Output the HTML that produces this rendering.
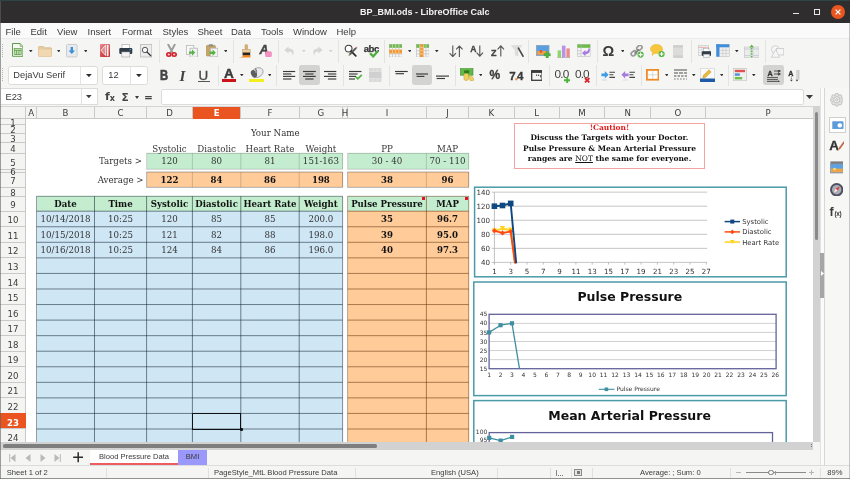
<!DOCTYPE html><html lang="en"><head><meta charset="utf-8"><title>BP_BMI.ods - LibreOffice Calc</title><style>
*{box-sizing:border-box;margin:0;padding:0}
html,body{width:850px;height:479px;overflow:hidden;background:#f5f5f4}
#root{position:absolute;left:0;top:0;width:850px;height:479px;overflow:hidden;will-change:transform}
body{position:relative;font-family:"DejaVu Sans","Liberation Sans",sans-serif;font-size:9px;color:#3a3a3a}
.a{position:absolute}
.t{position:absolute;white-space:nowrap;line-height:1}
.ui{font-family:"Liberation Sans","DejaVu Sans",sans-serif}
.sf{font-family:"DejaVu Serif","Liberation Serif",serif}
.c{position:absolute;white-space:nowrap;text-align:center;font-family:"DejaVu Serif","Liberation Serif",serif;font-size:8.68px;line-height:1;color:#333}
.b{font-weight:bold;color:#111;font-size:8.6px}
.hd{position:absolute;text-align:center;font-size:8.6px;line-height:1;color:#3c3c3c;white-space:nowrap}
.vl{position:absolute;width:1px}
.hl{position:absolute;height:1px}
</style></head><body><div id="root">
<div class="a" style="left:0;top:0;width:850px;height:23px;background:#2f2d2d"></div>
<div class="a" style="left:0;top:0;width:850px;height:1px;background:#2b4645"></div>
<div class="t ui" style="left:360.1px;top:7.6px;color:#f4f4f4;font-weight:bold;font-size:9.2pxletter-spacing:-0.067px;">BP_BMI.ods - LibreOffice Calc</div>
<div class="a" style="left:793px;top:12.600px;width:6.200px;height:1.300px;background:#e8e8e8"></div>
<div class="a" style="left:813.700px;top:8.800px;width:6.200px;height:5.800px;border:1.200px solid #e8e8e8"></div>
<div class="a" style="left:831px;top:5px;width:14px;height:14px;border-radius:7px;background:#e9561f"></div>
<svg class="a" style="left:831px;top:5px" width="14" height="14" viewBox="0 0 14 14"><path d="M4.6 4.6L9.4 9.4M9.4 4.6L4.6 9.4" stroke="#fff" stroke-width="1.3" fill="none"/></svg>
<div class="a" style="left:0;top:23px;width:850px;height:15.5px;background:#fafafa;border-bottom:1px solid #ebebea"></div>
<div class="t ui" style="left:5.5px;top:27.2px;font-size:9.5px;color:#3d3d3dletter-spacing:-0.203px;">File</div>
<div class="t ui" style="left:30.5px;top:27.2px;font-size:9.5px;color:#3d3d3dletter-spacing:0.031px;">Edit</div>
<div class="t ui" style="left:57px;top:27.2px;font-size:9.5px;color:#3d3d3dletter-spacing:0.145px;">View</div>
<div class="t ui" style="left:87.5px;top:27.2px;font-size:9.5px;color:#3d3d3dletter-spacing:-0.044px;">Insert</div>
<div class="t ui" style="left:122px;top:27.2px;font-size:9.5px;color:#3d3d3dletter-spacing:0.068px;">Format</div>
<div class="t ui" style="left:162.5px;top:27.2px;font-size:9.5px;color:#3d3d3dletter-spacing:-0.229px;">Styles</div>
<div class="t ui" style="left:197.5px;top:27.2px;font-size:9.5px;color:#3d3d3dletter-spacing:-0.266px;">Sheet</div>
<div class="t ui" style="left:231px;top:27.2px;font-size:9.5px;color:#3d3d3dletter-spacing:-0.145px;">Data</div>
<div class="t ui" style="left:261px;top:27.2px;font-size:9.5px;color:#3d3d3dletter-spacing:-0.037px;">Tools</div>
<div class="t ui" style="left:293px;top:27.2px;font-size:9.5px;color:#3d3d3dletter-spacing:0.034px;">Window</div>
<div class="t ui" style="left:336.5px;top:27.2px;font-size:9.5px;color:#3d3d3dletter-spacing:-0.137px;">Help</div>
<div class="a" style="left:2.3px;top:44px;width:1px;height:13.5px;background:repeating-linear-gradient(#b4b4b4 0 1px,transparent 1px 2px)"></div>
<div class="a" style="left:2.3px;top:68.3px;width:1px;height:13.5px;background:repeating-linear-gradient(#b4b4b4 0 1px,transparent 1px 2px)"></div>
<svg class="a" style="left:11.5px;top:43.4px" width="11.4" height="13.8" viewBox="0 0 11.4 13.8"><path d="M0.5 0.5h7.6l2.8 2.8v10h-10.4z" fill="#f6faf3" stroke="#5e9b4a" stroke-width="1"/><path d="M8.100 0.500v2.800h2.800" fill="#cfe3c4" stroke="#5e9b4a" stroke-width="0.600"/><rect x="2.2" y="5.600" width="7" height="6" fill="#c3e2b3" stroke="#5a9646" stroke-width="0.7"/><path d="M2.200 7.400h7" stroke="#5a9646" stroke-width="0.800"/><path d="M4.5 7.400v4.200M6.9 7.400v4.200" stroke="#5a9646" stroke-width="0.700"/></svg>
<svg class="a" style="left:29.2px;top:49.9px" width="3.6" height="2.4" viewBox="0 0 3.6 2.4"><path d="M0 0h3.6L1.8 2.4z" fill="#2e2e2e"/></svg>
<svg class="a" style="left:38px;top:45.6px" width="14" height="11" viewBox="0 0 14 11"><path d="M0.5 1.2q0-0.7 0.7-0.7h4.2l1 1.3h6.4q0.7 0 0.7 0.7v7.3q0 0.7-0.7 0.7h-11.6q-0.7 0-0.7-0.7z" fill="#e6caa0" stroke="#d2b384" stroke-width="0.7"/><path d="M0.6 3.6h12.8v6.3q0 0.6-0.6 0.6h-11.6q-0.6 0-0.6-0.6z" fill="#f0d8b3"/></svg>
<svg class="a" style="left:56.5px;top:49.9px" width="3.6" height="2.4" viewBox="0 0 3.6 2.4"><path d="M0 0h3.6L1.8 2.4z" fill="#2e2e2e"/></svg>
<svg class="a" style="left:66.3px;top:44.3px" width="11.6" height="13.4" viewBox="0 0 11.6 13.4"><rect x="0.5" y="0.5" width="10.6" height="12.4" rx="1" fill="#e8eaec" stroke="#c2c5c9" stroke-width="0.8"/><path d="M4.6 3h2.4v3.6h2l-3.2 3.4l-3.2-3.4h2z" fill="#3a8fd6"/></svg>
<svg class="a" style="left:83.8px;top:49.9px" width="3.6" height="2.4" viewBox="0 0 3.6 2.4"><path d="M0 0h3.6L1.8 2.4z" fill="#2e2e2e"/></svg>
<svg class="a" style="left:100px;top:44px" width="10" height="13" viewBox="0 0 10 13"><defs><linearGradient id="pg" x1="0" y1="0" x2="0.6" y2="1"><stop offset="0" stop-color="#e98a8e"/><stop offset="1" stop-color="#c4343c"/></linearGradient></defs><rect x="0" y="0" width="10" height="13" rx="0.8" fill="url(#pg)"/><path d="M5.600 1.200L1 6.200l4.600 5.400z" fill="rgba(255,255,255,0.30)" stroke="#fdf0f0" stroke-width="0.800"/><rect x="6.800" y="0.800" width="1.700" height="11.400" fill="#fdf0f0"/></svg>
<svg class="a" style="left:119px;top:44.3px" width="13.6" height="13.4" viewBox="0 0 13.6 13.4"><rect x="3" y="0.4" width="7.6" height="4.2" fill="#fff" stroke="#9aa0a6" stroke-width="0.6"/><rect x="0.3" y="4" width="13" height="6" rx="1.2" fill="#2f3b46"/><rect x="2.8" y="8" width="8" height="5" fill="#f4f4f4" stroke="#9aa0a6" stroke-width="0.6"/><rect x="10.6" y="5.2" width="1.4" height="1" fill="#5bb0e8"/></svg>
<svg class="a" style="left:140.2px;top:44.3px" width="12.2" height="13.4" viewBox="0 0 12.2 13.4"><rect x="0.4" y="0.4" width="11.4" height="12.6" fill="#ececec" stroke="#b9b9b9" stroke-width="0.8"/><circle cx="5" cy="6" r="2.700" fill="#f6f6f6" stroke="#4a4a4a" stroke-width="0.900"/><path d="M7 8l3.800 3.800" stroke="#3a3a3a" stroke-width="1.300" stroke-linecap="round"/></svg>
<div class="a" style="left:159.2px;top:40px;width:1px;height:22.5px;background:#e3e3e2"></div>
<svg class="a" style="left:166px;top:44.3px" width="11" height="13" viewBox="0 0 11 13"><path d="M2.200 0.500l4.400 8.200M8.800 0.500l-4.400 8.200" stroke="#9b9b9b" stroke-width="1.900" stroke-linecap="round"/><ellipse cx="2.800" cy="10.500" rx="2" ry="1.700" fill="#f3c0c2" stroke="#d3212a" stroke-width="1.600"/><ellipse cx="8.200" cy="10.500" rx="2" ry="1.700" fill="#f3c0c2" stroke="#d3212a" stroke-width="1.600"/></svg>
<svg class="a" style="left:186.2px;top:44.6px" width="12" height="12.8" viewBox="0 0 12 12.8"><rect x="0.4" y="0.4" width="7.4" height="9" fill="#fafafa" stroke="#b7b7b7" stroke-width="0.8"/><rect x="4" y="3.2" width="7.4" height="9" fill="#f1f1f1" stroke="#b7b7b7" stroke-width="0.8"/><path d="M3 6.4h3v-2l3.2 3.2l-3.2 3.2v-2h-3z" fill="#56b346"/></svg>
<svg class="a" style="left:206px;top:44.3px" width="12.2" height="13.2" viewBox="0 0 12.2 13.2"><rect x="0.4" y="1.4" width="9" height="10.6" rx="0.9" fill="#c8a467" stroke="#a98547" stroke-width="0.6"/><rect x="2.8" y="0.3" width="4.2" height="2.2" rx="0.6" fill="#8d8d8d"/><rect x="4.6" y="4.2" width="7.2" height="8.6" fill="#f3f3f3" stroke="#b7b7b7" stroke-width="0.7"/><path d="M3.6 7.6h3v-2l3.2 3.2l-3.2 3.2v-2h-3z" fill="#56b346"/></svg>
<svg class="a" style="left:223.7px;top:49.9px" width="3.6" height="2.4" viewBox="0 0 3.6 2.4"><path d="M0 0h3.6L1.8 2.4z" fill="#2e2e2e"/></svg>
<div class="a" style="left:232.5px;top:40px;width:1px;height:22.5px;background:#e3e3e2"></div>
<svg class="a" style="left:238.5px;top:43.6px" width="12.4" height="14" viewBox="0 0 12.4 14"><rect x="6" y="0.4" width="2.6" height="5.4" rx="1.2" fill="#d9b27a" stroke="#b98f55" stroke-width="0.5"/><rect x="3.6" y="5.6" width="7.6" height="3" fill="#e8cf9f" stroke="#b98f55" stroke-width="0.5"/><rect x="3.6" y="8.6" width="7.6" height="3" fill="#2b2420"/><path d="M0.4 13.2q3.6 0 3.6-2h7.4v2.2h-11z" fill="#ef8a1d"/></svg>
<div class="t ui" style="left:259.400px;top:43.800px;font-size:12.400px;font-weight:bold;font-style:italic;color:#454545;-webkit-text-stroke:0.500px #454545">A</div>
<svg class="a" style="left:265.4px;top:50.6px" width="7.2" height="6.6" viewBox="0 0 7.2 6.6"><rect x="0.400" y="0.400" width="6.200" height="5.600" rx="1.600" fill="#f391c0" stroke="#e77fb2" stroke-width="0.400"/></svg>
<div class="a" style="left:278px;top:40px;width:1px;height:22.5px;background:#e3e3e2"></div>
<svg class="a" style="left:284px;top:45.6px" width="11" height="10.4" viewBox="0 0 11 10.4"><path d="M4.6 0.4L0.4 4l4.2 3.6v-2.2q4.2-0.2 4 4.6q3.4-7.4-4-7.6z" fill="#d6d6d6"/></svg>
<svg class="a" style="left:302.2px;top:49.9px" width="3.6" height="2.4" viewBox="0 0 3.6 2.4"><path d="M0 0h3.6L1.8 2.4z" fill="#d0d0d0"/></svg>
<svg class="a" style="left:312px;top:45.6px" width="11" height="10.4" viewBox="0 0 11 10.4"><path d="M6.4 0.4L10.6 4l-4.2 3.6v-2.2q-4.2-0.2-4 4.6q-3.4-7.4 4-7.6z" fill="#d6d6d6"/></svg>
<svg class="a" style="left:329.4px;top:49.9px" width="3.6" height="2.4" viewBox="0 0 3.6 2.4"><path d="M0 0h3.6L1.8 2.4z" fill="#d0d0d0"/></svg>
<div class="a" style="left:338.3px;top:40px;width:1px;height:22.5px;background:#e3e3e2"></div>
<svg class="a" style="left:344px;top:44.2px" width="14" height="13.4" viewBox="0 0 14 13.4"><circle cx="4.6" cy="4.6" r="3.4" fill="#fdfdfd" stroke="#3a3a3a" stroke-width="1.1"/><path d="M7 7.2l4.8 4.6" stroke="#2c2c2c" stroke-width="1.8" stroke-linecap="round"/><path d="M12.6 4.6L6.6 10.8l-1.8 0.8l0.6-1.9l6-6.2z" fill="#555" stroke="#333" stroke-width="0.3"/><path d="M11.4 3.5l1.2 1.1l1-1l-1.2-1.2z" fill="#e8849c"/><path d="M4.8 11.6l0.5-1.4l0.9 0.9z" fill="#c8d860"/></svg>
<div class="t ui" style="left:363.800px;top:44.300px;font-size:9.600px;font-weight:bold;color:#333;letter-spacing:-0.550px;-webkit-text-stroke:0.250px #333">abc</div>
<svg class="a" style="left:368.8px;top:50px" width="10" height="7.8" viewBox="0 0 10 7.8"><path d="M1 3.200l3.200 3.200l4.800-5.400" stroke="#4daf3c" stroke-width="2.300" fill="none"/></svg>
<div class="a" style="left:383.9px;top:40px;width:1px;height:22.5px;background:#e3e3e2"></div>
<svg class="a" style="left:388.9px;top:44px" width="13.4" height="13.4" viewBox="0 0 13.4 13.4"><rect x="0.3" y="0.3" width="12.8" height="12.8" fill="#f7f7f7" stroke="#b9b9b9" stroke-width="0.6"/><path d="M3.5 0.3v12.8M6.7 0.3v12.8M9.9 0.3v12.8M0.3 3.5h12.8M0.3 6.7h12.8M0.3 9.9h12.8" stroke="#bcbcbc" stroke-width="0.7"/><rect x="0.3" y="0.3" width="12.8" height="3.4" fill="#72b851"/><rect x="0.3" y="5.600" width="12.8" height="3.800" fill="#f29a33"/><path d="M3.5 0.3v3.400M6.7 0.3v3.400M9.9 0.3v3.400M3.5 5.600v3.800M6.7 5.600v3.800M9.9 5.600v3.800" stroke="#fff" stroke-width="0.6" opacity="0.75"/></svg>
<svg class="a" style="left:407.6px;top:49.9px" width="3.6" height="2.4" viewBox="0 0 3.6 2.4"><path d="M0 0h3.6L1.8 2.4z" fill="#2e2e2e"/></svg>
<svg class="a" style="left:416px;top:44px" width="13.4" height="13.4" viewBox="0 0 13.4 13.4"><rect x="0.3" y="0.3" width="12.8" height="12.8" fill="#f7f7f7" stroke="#b9b9b9" stroke-width="0.6"/><path d="M3.5 0.3v12.8M6.7 0.3v12.8M9.9 0.3v12.8M0.3 3.5h12.8M0.3 6.7h12.8M0.3 9.9h12.8" stroke="#bcbcbc" stroke-width="0.7"/><rect x="0.3" y="0.3" width="12.8" height="3.4" fill="#72b851"/><rect x="3.900" y="0.3" width="3.600" height="12.8" fill="#f29a33"/><path d="M3.700 0.3v3.400M7.700 0.3v3.400M10.100 0.3v3.400M3.900 3.700h3.600M3.900 6.700h3.600M3.900 9.900h3.600" stroke="#fff" stroke-width="0.6" opacity="0.75"/></svg>
<svg class="a" style="left:435px;top:49.9px" width="3.6" height="2.4" viewBox="0 0 3.6 2.4"><path d="M0 0h3.6L1.8 2.4z" fill="#2e2e2e"/></svg>
<svg class="a" style="left:449px;top:44.6px" width="14.4" height="12.6" viewBox="0 0 14.4 12.6"><path d="M3.8 0.6v10.8M0.6 8.2l3.2 3.4l3.2-3.4M10.4 12V1.2M7.2 4.4l3.2-3.4l3.2 3.4" stroke="#555" stroke-width="1.1" fill="none"/></svg>
<div class="t ui" style="left:470.200px;top:44.800px;font-size:8.600px;font-weight:bold;color:#444;-webkit-text-stroke-width:0.300px">A</div>
<svg class="a" style="left:476.4px;top:45.4px" width="7.6" height="12" viewBox="0 0 7.6 12"><path d="M3.8 0.4v10.6M0.6 7.6l3.2 3.6l3.2-3.6" stroke="#555" stroke-width="1.1" fill="none"/></svg>
<div class="t ui" style="left:491px;top:49.2px;font-size:9px;font-weight:bold;color:#444;-webkit-text-stroke-width:0.300px">Z</div>
<svg class="a" style="left:497.2px;top:44.6px" width="7.6" height="12" viewBox="0 0 7.6 12"><path d="M3.8 11.6V1M0.6 4.4l3.2-3.6l3.2 3.6" stroke="#555" stroke-width="1.1" fill="none"/></svg>
<svg class="a" style="left:511.3px;top:45px" width="13" height="12.4" viewBox="0 0 13 12.4"><path d="M0.4 0.6h10.4l-3.8 4.6v6l-2.8-1.2v-4.8z" fill="#dedede" stroke="#cfcfcf" stroke-width="0.4"/><path d="M7.4 3.2l4.6 8" stroke="#4a4a4a" stroke-width="1.7" stroke-linecap="round"/></svg>
<div class="a" style="left:528px;top:40px;width:1px;height:22.5px;background:#e3e3e2"></div>
<svg class="a" style="left:536.2px;top:45px" width="14.4" height="12.6" viewBox="0 0 14.4 12.6"><rect x="0.4" y="0.4" width="12.6" height="10.2" fill="#5b9fe0" stroke="#8da2b8" stroke-width="0.8"/><rect x="1.2" y="6" width="11" height="3.8" fill="#f0a04a"/><circle cx="5" cy="6.4" r="1.3" fill="#e7502e"/><path d="M10 6.6h2.4v2h2v2.4h-2v2h-2.4v-2h-2v-2.4h2z" fill="#4fb23f" stroke="#3c8f30" stroke-width="0.3"/></svg>
<svg class="a" style="left:557px;top:44.6px" width="13.4" height="13" viewBox="0 0 13.4 13"><rect x="0.6" y="5.4" width="3.4" height="7" fill="#8fd46a"/><rect x="4.9" y="0.6" width="3.6" height="11.8" fill="#b892e6"/><rect x="9.4" y="3.4" width="3.4" height="9" fill="#ea8b8b"/><path d="M0 12.6h13.4" stroke="#999" stroke-width="0.6"/></svg>
<svg class="a" style="left:577px;top:44.4px" width="14" height="13.2" viewBox="0 0 14 13.2"><rect x="0.4" y="0.4" width="12.8" height="12.2" fill="#f4f4f4" stroke="#c0c0c0" stroke-width="0.6"/><rect x="0.4" y="0.4" width="12.8" height="3.4" fill="#6dbb4d"/><path d="M4 0.4v12.2M0.4 6.8h3.6M0.4 9.8h3.6" stroke="#b5b5b5" stroke-width="0.6"/><path d="M5 9l3.4-3v1.8q3-0.2 3-3.2h1.6q0.2 5.6-4.6 5.8v1.8z" fill="#a77adf"/></svg>
<div class="a" style="left:596.5px;top:40px;width:1px;height:22.5px;background:#e3e3e2"></div>
<div class="t ui" style="left:602.4px;top:43.6px;font-size:14.6px;font-weight:bold;color:#3a3a3a">Ω</div>
<svg class="a" style="left:620.6px;top:49.9px" width="3.6" height="2.4" viewBox="0 0 3.6 2.4"><path d="M0 0h3.6L1.8 2.4z" fill="#2e2e2e"/></svg>
<svg class="a" style="left:630.4px;top:44.6px" width="14.2" height="13" viewBox="0 0 14.2 13"><g fill="none" stroke="#9a9a9a" stroke-width="1.7"><rect x="6.6" y="0.8" width="5.6" height="4" rx="2" transform="rotate(-40 9.4 2.8)"/><rect x="1" y="6.4" width="5.6" height="4" rx="2" transform="rotate(-40 3.8 8.4)"/></g><path d="M4.6 8.6l4.4-4.2" stroke="#7d7d7d" stroke-width="1.5"/><circle cx="10.6" cy="9.6" r="3.1" fill="#58b848"/><path d="M10.6 7.6v4M8.6 9.6h4" stroke="#fff" stroke-width="1.1"/></svg>
<svg class="a" style="left:650px;top:44.4px" width="15" height="13.4" viewBox="0 0 15 13.4"><path d="M6.4 0.4c3.6 0 6.2 2 6.2 4.6s-2.6 4.6-6.2 4.6q-1 0-1.8-0.2l-2.6 2l0.6-2.8q-2.2-1.4-2.2-3.6c0-2.6 2.6-4.6 6-4.6z" fill="#f7c63c" stroke="#e0a820" stroke-width="0.4"/><circle cx="11.6" cy="10" r="3.1" fill="#58b848"/><path d="M11.6 8v4M9.6 10h4" stroke="#fff" stroke-width="1.1"/></svg>
<svg class="a" style="left:672.8px;top:45px" width="10.6" height="13" viewBox="0 0 10.6 13"><rect x="0.3" y="0.3" width="10" height="12.4" fill="#dcdcdc" stroke="#d0d0d0" stroke-width="0.5"/><rect x="0.3" y="0.3" width="10" height="2.4" fill="#cfcfcf"/><rect x="0.3" y="10.3" width="10" height="2.4" fill="#cfcfcf"/></svg>
<div class="a" style="left:691px;top:40px;width:1px;height:22.5px;background:#e3e3e2"></div>
<svg class="a" style="left:697.6px;top:44.6px" width="13.8" height="13" viewBox="0 0 13.8 13"><rect x="0.3" y="0.3" width="10.4" height="10" fill="#f4f4f4" stroke="#c4c4c4" stroke-width="0.6"/><path d="M0.3 2.4h10.4" stroke="#e8a0a0" stroke-width="0.8"/><path d="M3.6 0.3v10M7 0.3v10M0.3 5h10.4M0.3 7.6h10.4" stroke="#cdcdcd" stroke-width="0.5"/><rect x="5.6" y="3.6" width="5.4" height="3" fill="#fff" stroke="#9aa0a6" stroke-width="0.5"/><rect x="3.8" y="6.2" width="9.6" height="4.6" rx="0.9" fill="#2f3b46"/><rect x="5.6" y="9.2" width="6" height="3.4" fill="#f4f4f4" stroke="#9aa0a6" stroke-width="0.5"/></svg>
<svg class="a" style="left:716px;top:44.4px" width="13.8" height="13.2" viewBox="0 0 13.8 13.2"><rect x="0.3" y="0.3" width="13" height="12.4" fill="#f0f0f0" stroke="#c0c0c0" stroke-width="0.6"/><path d="M6.8 3.4v9.4M10 3.4v9.4M3.4 6.4h10M3.4 9.4h10" stroke="#c4c4c4" stroke-width="0.6"/><rect x="0.3" y="0.3" width="13" height="3" fill="#3e8edb"/><rect x="0.3" y="0.3" width="3.2" height="12.4" fill="#3e8edb"/></svg>
<svg class="a" style="left:735.1px;top:49.9px" width="3.6" height="2.4" viewBox="0 0 3.6 2.4"><path d="M0 0h3.6L1.8 2.4z" fill="#2e2e2e"/></svg>
<svg class="a" style="left:744px;top:43.6px" width="15.4" height="14" viewBox="0 0 15.4 14"><rect x="0.3" y="3" width="6" height="10.4" fill="#ececec" stroke="#c4c4c4" stroke-width="0.6"/><rect x="9" y="3" width="6" height="10.4" fill="#ececec" stroke="#c4c4c4" stroke-width="0.6"/><path d="M0.3 5h6M9 5h6M0.3 11.6h6M9 11.6h6" stroke="#b9c2d4" stroke-width="0.7"/><path d="M7.7 4v9.4" stroke="#5bb342" stroke-width="1.5" stroke-dasharray="1.6 1"/><path d="M5.4 3.4l2.3-3l2.3 3z" fill="#5bb342"/></svg>
<div class="a" style="left:764.5px;top:40px;width:1px;height:22.5px;background:#e3e3e2"></div>
<svg class="a" style="left:769.6px;top:44.6px" width="14.6" height="13" viewBox="0 0 14.6 13"><circle cx="5.4" cy="4.6" r="4" fill="#f6f6f6" stroke="#c9c9c9" stroke-width="0.8"/><rect x="6.6" y="3.4" width="7.2" height="6.6" fill="#f6f6f6" stroke="#c9c9c9" stroke-width="0.8"/><path d="M5.6 4.6l4.2 7.6h-8.4z" fill="#f6f6f6" stroke="#c9c9c9" stroke-width="0.8"/></svg>
<div class="a" style="left:8.2px;top:66px;width:89.4px;height:18.6px;background:#fff;border:1px solid #dcdcdb;border-radius:2.5px"></div>
<div class="a" style="left:80.2px;top:67px;width:1px;height:16.6px;background:#e4e4e3"></div>
<div class="t ui" style="left:13.3px;top:71px;font-size:9.3px;color:#444letter-spacing:-0.005px;">DejaVu Serif</div>
<svg class="a" style="left:85.8px;top:73.6px" width="5.8" height="3.2" viewBox="0 0 5.8 3.2"><path d="M0 0h5.8L2.9 3.2z" fill="#2e2e2e"/></svg>
<div class="a" style="left:102.4px;top:66px;width:45.2px;height:18.6px;background:#fff;border:1px solid #dcdcdb;border-radius:2.5px"></div>
<div class="a" style="left:130px;top:67px;width:1px;height:16.6px;background:#e4e4e3"></div>
<div class="t ui" style="left:108.3px;top:71px;font-size:9.3px;color:#444letter-spacing:-0.672px;">12</div>
<svg class="a" style="left:136.3px;top:73.6px" width="5.8" height="3.2" viewBox="0 0 5.8 3.2"><path d="M0 0h5.8L2.9 3.2z" fill="#2e2e2e"/></svg>
<div class="t ui" style="left:159.500px;top:67.700px;font-size:14.800px;font-weight:bold;color:#444;transform:scaleX(0.760);transform-origin:0 0;-webkit-text-stroke:0.6px #444">B</div>
<div class="t" style="left:179.600px;top:67.600px;font-size:15.200px;font-style:italic;color:#444;font-family:'Liberation Serif',serif;font-weight:bold">I</div>
<div class="t ui" style="left:198.600px;top:68.800px;font-size:13.400px;color:#444;-webkit-text-stroke:0.300px #444">U</div>
<div class="a" style="left:198px;top:81.200px;width:11.800px;height:1.100px;background:#555"></div>
<div class="a" style="left:217.5px;top:64.5px;width:1px;height:21.5px;background:#e3e3e2"></div>
<div class="t ui" style="left:224px;top:67px;font-size:13.600px;font-weight:bold;color:#383838;-webkit-text-stroke:0.450px #383838">A</div>
<div class="a" style="left:221.500px;top:79px;width:14.200px;height:2.900px;background:#c9151a"></div>
<svg class="a" style="left:240.3px;top:73.9px" width="3.6" height="2.4" viewBox="0 0 3.6 2.4"><path d="M0 0h3.6L1.8 2.4z" fill="#2e2e2e"/></svg>
<svg class="a" style="left:250px;top:67.4px" width="13.6" height="11.4" viewBox="0 0 13.6 11.4"><ellipse cx="7.400" cy="5.600" rx="6" ry="4.600" transform="rotate(-28 7.400 5.600)" fill="#e9e9ee" stroke="#8e8e8e" stroke-width="0.700"/><ellipse cx="3.900" cy="6.800" rx="2.700" ry="4" transform="rotate(-28 3.900 6.800)" fill="#5f5f5f"/><path d="M5.600 1.600q1.600 2.600 0.400 6" stroke="#4a4a4a" stroke-width="0.900" fill="none"/><circle cx="6" cy="5" r="0.900" fill="#f2f2f2" stroke="#444" stroke-width="0.500"/></svg>
<div class="a" style="left:248.500px;top:79px;width:15px;height:2.900px;background:#f3ef1f"></div>
<svg class="a" style="left:267.6px;top:73.9px" width="3.6" height="2.4" viewBox="0 0 3.6 2.4"><path d="M0 0h3.6L1.8 2.4z" fill="#2e2e2e"/></svg>
<div class="a" style="left:276px;top:64.5px;width:1px;height:21.5px;background:#e3e3e2"></div>
<div class="a" style="left:299.3px;top:64.8px;width:20.7px;height:20.6px;background:#d3d3d2;border-radius:2.4px"></div>
<svg class="a" style="left:282.8px;top:68px" width="14" height="14" viewBox="0 0 14 14"><rect x="0" y="2.925" width="12.2" height="1.15" fill="#3a3a3a"/><rect x="0" y="5.425" width="8.4" height="1.15" fill="#3a3a3a"/><rect x="0" y="7.825" width="12.2" height="1.15" fill="#3a3a3a"/><rect x="0" y="10.425" width="8.4" height="1.15" fill="#3a3a3a"/></svg>
<svg class="a" style="left:303.2px;top:68px" width="14" height="14" viewBox="0 0 14 14"><rect x="0" y="2.925" width="12.8" height="1.15" fill="#3a3a3a"/><rect x="2.2" y="5.425" width="8.4" height="1.15" fill="#3a3a3a"/><rect x="0" y="7.825" width="12.8" height="1.15" fill="#3a3a3a"/><rect x="2.2" y="10.425" width="8.4" height="1.15" fill="#3a3a3a"/></svg>
<svg class="a" style="left:323.7px;top:68px" width="14" height="14" viewBox="0 0 14 14"><rect x="0" y="2.925" width="12.3" height="1.15" fill="#3a3a3a"/><rect x="3.9" y="5.425" width="8.4" height="1.15" fill="#3a3a3a"/><rect x="0" y="7.825" width="12.3" height="1.15" fill="#3a3a3a"/><rect x="3.9" y="10.425" width="8.4" height="1.15" fill="#3a3a3a"/></svg>
<div class="a" style="left:343.3px;top:64.5px;width:1px;height:21.5px;background:#e3e3e2"></div>
<svg class="a" style="left:348.7px;top:68px" width="14" height="14" viewBox="0 0 14 14"><rect x="0" y="2.925" width="12.4" height="1.15" fill="#3a3a3a"/><rect x="0" y="5.425" width="8.6" height="1.15" fill="#3a3a3a"/><rect x="0" y="7.825" width="7" height="1.15" fill="#3a3a3a"/><rect x="0" y="10.425" width="6" height="1.15" fill="#3a3a3a"/></svg>
<svg class="a" style="left:355.4px;top:74.4px" width="7.6" height="6" viewBox="0 0 7.6 6"><path d="M0.8 2.8l2 2l4-4" stroke="#55b544" stroke-width="1.8" fill="none"/></svg>
<svg class="a" style="left:369.3px;top:67.7px" width="12.6" height="14.2" viewBox="0 0 12.6 14.2"><rect x="0" y="0" width="12.4" height="14" fill="#dadada"/><path d="M4.1 0v14M8.3 0v14M0 3.5h12.4M0 10.5h12.4" stroke="#e8e8e8" stroke-width="0.7"/><rect x="0" y="3.8" width="12.4" height="6.4" fill="#d0d0d0"/></svg>
<div class="a" style="left:389px;top:64.5px;width:1px;height:21.5px;background:#e3e3e2"></div>
<div class="a" style="left:412.2px;top:64.8px;width:19.8px;height:20.6px;background:#d3d3d2;border-radius:2.4px"></div>
<svg class="a" style="left:394.8px;top:68px" width="14" height="14" viewBox="0 0 14 14"><rect x="0" y="2.925" width="12.7" height="1.15" fill="#3a3a3a"/><rect x="0.6" y="5.125" width="8.4" height="1.15" fill="#3a3a3a"/></svg>
<svg class="a" style="left:416px;top:68px" width="14" height="14" viewBox="0 0 14 14"><rect x="0" y="5.425" width="12" height="1.15" fill="#3a3a3a"/><rect x="0.6" y="7.825" width="7.8" height="1.15" fill="#3a3a3a"/></svg>
<svg class="a" style="left:435.8px;top:68px" width="14" height="14" viewBox="0 0 14 14"><rect x="0" y="7.525" width="13" height="1.15" fill="#3a3a3a"/><rect x="0.6" y="9.925" width="8.4" height="1.15" fill="#3a3a3a"/></svg>
<div class="a" style="left:455.1px;top:64.5px;width:1px;height:21.5px;background:#e3e3e2"></div>
<svg class="a" style="left:459.6px;top:67.8px" width="14.6" height="13.4" viewBox="0 0 14.6 13.4"><rect x="0.4" y="0.6" width="12.6" height="6.6" fill="#62b846" stroke="#3f922c" stroke-width="0.6"/><rect x="4" y="2.2" width="5.4" height="3.2" rx="1.4" fill="#2f7a22"/><path d="M4 6.6q0-1.2 2.2-1.2t2.2 1.2v4.6q0 1.2-2.2 1.2t-2.2-1.2z" fill="#f0d264" stroke="#b79a2e" stroke-width="0.5"/><path d="M8.6 8.2q1.6-1.4 3.2 0l2 2.6q0.6 1.4-1 2t-2.600-0.400z" fill="#f0d264" stroke="#b79a2e" stroke-width="0.5"/></svg>
<svg class="a" style="left:478.9px;top:73.9px" width="3.6" height="2.4" viewBox="0 0 3.6 2.4"><path d="M0 0h3.6L1.8 2.4z" fill="#2e2e2e"/></svg>
<div class="t ui" style="left:489.6px;top:69.4px;font-size:12px;font-weight:bold;color:#3a3a3a;letter-spacing:-0.3px;-webkit-text-stroke-width:0.300px">%</div>
<div class="t ui" style="left:509.2px;top:69.6px;font-size:11.6px;font-weight:bold;color:#3a3a3a;letter-spacing:-0.900px;-webkit-text-stroke-width:0.300px">7<span style="color:#f0873a">.</span>4</div>
<svg class="a" style="left:530.5px;top:69.6px" width="11.8" height="11" viewBox="0 0 11.8 11"><rect x="0.7" y="0.7" width="10.4" height="9.6" fill="none" stroke="#3a3a3a" stroke-width="1.3"/><rect x="0.7" y="0.7" width="10.4" height="2.2" fill="#3a3a3a"/><rect x="5" y="4.6" width="1.2" height="1.2" fill="#3a3a3a"/><rect x="7" y="4.6" width="1.2" height="1.2" fill="#3a3a3a"/><rect x="9" y="5" width="0.8" height="2.4" fill="#3a3a3a"/></svg>
<div class="a" style="left:549px;top:64.5px;width:1px;height:21.5px;background:#e3e3e2"></div>
<div class="t ui" style="left:554.6px;top:69px;font-size:11.8px;color:#3f3f3f;letter-spacing:-0.9px">0.0</div>
<svg class="a" style="left:564px;top:77px" width="6.4" height="6.4" viewBox="0 0 6.4 6.4"><path d="M2.2 0h2v2.200h2.200v2h-2.200v2.200h-2v-2.200h-2.200v-2h2.200z" fill="#4db33d"/></svg>
<div class="t ui" style="left:575px;top:69px;font-size:11.8px;color:#3f3f3f;letter-spacing:-0.9px">0.0</div>
<svg class="a" style="left:584px;top:77px" width="6.4" height="6.4" viewBox="0 0 6.4 6.4"><path d="M1 1l4.4 4.400M5.400 1l-4.400 4.400" stroke="#d9262c" stroke-width="1.9"/></svg>
<div class="a" style="left:595.5px;top:64.5px;width:1px;height:21.5px;background:#e3e3e2"></div>
<svg class="a" style="left:600.6px;top:69.6px" width="14.4" height="11" viewBox="0 0 14.4 11"><path d="M0.4 3.400h3.400v-2.400l3.800 3.800l-3.800 3.800v-2.400h-3.400z" fill="#3f9be6"/><path d="M8.400 2.200h5.600M8.400 4.800h4M8.400 7.400h5.600" stroke="#444" stroke-width="1.1"/><path d="M1 10h5" stroke="#bcd3ea" stroke-width="0.8"/></svg>
<svg class="a" style="left:621px;top:69.6px" width="14.4" height="11" viewBox="0 0 14.4 11"><path d="M7.600 3.400h-3.400v-2.400l-3.800 3.800l3.800 3.800v-2.400h3.400z" fill="#a77adf"/><path d="M8.400 2.200h5.600M8.400 4.800h4M8.400 7.400h5.600" stroke="#444" stroke-width="1.1"/><path d="M2 10h5" stroke="#dccdf0" stroke-width="0.8"/></svg>
<div class="a" style="left:641px;top:64.5px;width:1px;height:21.5px;background:#e3e3e2"></div>
<svg class="a" style="left:646px;top:69px" width="13.4" height="11.6" viewBox="0 0 13.4 11.6"><rect x="0.9" y="0.9" width="11.600" height="9.800" fill="#fff" stroke="#f08a24" stroke-width="1.8"/><path d="M6.700 1.800v8M1.800 5.800h9.800" stroke="#c8c8c8" stroke-width="0.7"/></svg>
<svg class="a" style="left:664.8px;top:73.9px" width="3.6" height="2.4" viewBox="0 0 3.6 2.4"><path d="M0 0h3.6L1.8 2.4z" fill="#2e2e2e"/></svg>
<svg class="a" style="left:673.6px;top:69.4px" width="13.4" height="11" viewBox="0 0 13.4 11"><path d="M0 1h13.200" stroke="#4a4a4a" stroke-width="1"/><path d="M0 4h13.200" stroke="#4a4a4a" stroke-width="1" stroke-dasharray="4 1"/><path d="M0 7h13.200" stroke="#4a4a4a" stroke-width="1" stroke-dasharray="2.400 1.200"/><path d="M0.300 10h13.200" stroke="#4a4a4a" stroke-width="1" stroke-dasharray="1.200 1.800"/></svg>
<svg class="a" style="left:692.2px;top:73.9px" width="3.6" height="2.4" viewBox="0 0 3.6 2.4"><path d="M0 0h3.6L1.8 2.4z" fill="#2e2e2e"/></svg>
<svg class="a" style="left:700.2px;top:68.4px" width="15" height="14.2" viewBox="0 0 15 14.2"><rect x="0.4" y="0.4" width="14.200" height="10" fill="#fafafa" stroke="#cfcfcf" stroke-width="0.6"/><path d="M3.200 7.400l5.800-5.600l2.200 2.200l-5.800 5.600l-2.600 0.600z" fill="#e9b93c" stroke="#b98d24" stroke-width="0.4"/><rect x="0" y="10.600" width="15" height="3.400" fill="#1f5aa8"/></svg>
<svg class="a" style="left:719.6px;top:73.9px" width="3.6" height="2.4" viewBox="0 0 3.6 2.4"><path d="M0 0h3.6L1.8 2.4z" fill="#2e2e2e"/></svg>
<div class="a" style="left:727.9px;top:64.5px;width:1px;height:21.5px;background:#e3e3e2"></div>
<svg class="a" style="left:733px;top:68px" width="14" height="13.2" viewBox="0 0 14 13.2"><rect x="0.4" y="0.4" width="13" height="12.400" fill="#f0f0f0" stroke="#c4c4c4" stroke-width="0.7"/><rect x="1.800" y="1.800" width="10.200" height="2.400" fill="#e0524d"/><rect x="1.800" y="5.400" width="5" height="2.400" fill="#4a90d9"/><rect x="1.800" y="9" width="7.400" height="2.400" fill="#6cc04a"/></svg>
<svg class="a" style="left:752px;top:73.9px" width="3.6" height="2.4" viewBox="0 0 3.6 2.4"><path d="M0 0h3.6L1.8 2.4z" fill="#2e2e2e"/></svg>
<div class="a" style="left:763px;top:64.8px;width:21px;height:20.6px;background:#d3d3d2;border-radius:2.4px"></div>
<div class="t ui" style="left:767.600px;top:69.600px;font-size:7.200px;font-weight:bold;color:#333;-webkit-text-stroke-width:0.300px">A</div>
<svg class="a" style="left:774px;top:70px" width="7" height="6" viewBox="0 0 7 6"><path d="M0 1h4.600M0 4h4.600M4.400 -0.200l2 1.200l-2 1.200zM4.400 2.800l2 1.200l-2 1.200z" stroke="#444" stroke-width="0.9" fill="#444"/></svg>
<svg class="a" style="left:767px;top:77px" width="13.6" height="5" viewBox="0 0 13.6 5"><path d="M0 0.600h11M0 2.600h11M0 4.400h11" stroke="#444" stroke-width="0.900"/><path d="M11 3.200l2 1.200l-2 1.200z" fill="#444"/></svg>
<div class="t ui" style="left:788.300px;top:69.600px;font-size:7.200px;font-weight:bold;color:#333;-webkit-text-stroke-width:0.300px">A</div>
<svg class="a" style="left:788.6px;top:70px" width="11" height="13" viewBox="0 0 11 13"><path d="M8 0v9.600M9.800 0v9.600" stroke="#aaa" stroke-width="0.800"/><path d="M2.400 6.400v3.600" stroke="#555" stroke-width="0.900" stroke-dasharray="1 0.800"/><path d="M1 9.800h2.800l-1.400 1.800zM6.600 9.800h2.800l-1.400 1.800z" fill="#444"/></svg>
<div class="a" style="left:1px;top:88px;width:97px;height:17px;background:#fff;border:1px solid #dcdcdc;border-left:none"></div>
<div class="a" style="left:81px;top:89px;width:1px;height:15px;background:#e2e2e2"></div>
<div class="t ui" style="left:5.5px;top:92.9px;font-size:9.3px;color:#444letter-spacing:-0.349px;">E23</div>
<svg class="a" style="left:86px;top:95.300px" width="5.600" height="3.200"><path d="M0 0h5.600L2.800 3.200z" fill="#3a3a3a"/></svg>
<div class="t" style="left:105px;top:91.300px;font-size:11px;font-weight:bold;color:#444">f<span style="font-size:8px;position:relative;top:1px">x</span></div>
<div class="t" style="left:121.500px;top:91.600px;font-size:10.600px;font-weight:bold;color:#444">Σ</div>
<svg class="a" style="left:135px;top:96.300px" width="4" height="3"><path d="M0 0h4L2 3z" fill="#3a3a3a"/></svg>
<div class="t" style="left:144px;top:91.800px;font-size:10.600px;font-weight:bold;color:#444">=</div>
<div class="a" style="left:160.5px;top:89px;width:643px;height:16px;background:#fff;border:1px solid #dcdcdc;border-radius:2px"></div>
<svg class="a" style="left:805.5px;top:94.5px" width="7" height="4"><path d="M0 0h7L3.5 4z" fill="#3a3a3a"/></svg>
<div class="a" style="left:0;top:106px;width:813px;height:336px;background:#fff;overflow:hidden">
<div class="a" style="left:0;top:0;width:26px;height:336px;background:#f4f4f3;border-right:1px solid #c9c9c9"></div>
<div class="hl" style="left:0;top:18px;width:25.5px;background:#c9c9c9"></div>
<div class="hd" style="left:0;width:26px;top:13.05px;color:#3c3c3c;font-weight:normal">1</div>
<div class="hl" style="left:0;top:27px;width:25.5px;background:#c9c9c9"></div>
<div class="hd" style="left:0;width:26px;top:20.3px;color:#3c3c3c;font-weight:normal">2</div>
<div class="hl" style="left:0;top:36px;width:25.5px;background:#c9c9c9"></div>
<div class="hd" style="left:0;width:26px;top:29.3px;color:#3c3c3c;font-weight:normal">3</div>
<div class="hl" style="left:0;top:47px;width:25.5px;background:#c9c9c9"></div>
<div class="hd" style="left:0;width:26px;top:39.3px;color:#3c3c3c;font-weight:normal">4</div>
<div class="hl" style="left:0;top:62.8px;width:25.5px;background:#c9c9c9"></div>
<div class="hd" style="left:0;width:26px;top:52.6px;color:#3c3c3c;font-weight:normal">5</div>
<div class="hl" style="left:0;top:65.5px;width:25.5px;background:#c9c9c9"></div>
<div class="hd" style="left:0;width:26px;top:61.95px;color:#3c3c3c;font-weight:normal">6</div>
<div class="hl" style="left:0;top:80.9px;width:25.5px;background:#c9c9c9"></div>
<div class="hd" style="left:0;width:26px;top:71px;color:#3c3c3c;font-weight:normal">7</div>
<div class="hl" style="left:0;top:89.8px;width:25.5px;background:#c9c9c9"></div>
<div class="hd" style="left:0;width:26px;top:83.15px;color:#3c3c3c;font-weight:normal">8</div>
<div class="hl" style="left:0;top:104.7px;width:25.5px;background:#c9c9c9"></div>
<div class="hd" style="left:0;width:26px;top:95.05px;color:#3c3c3c;font-weight:normal">9</div>
<div class="hl" style="left:0;top:120.257px;width:25.5px;background:#c9c9c9"></div>
<div class="hd" style="left:0;width:26px;top:110.278px;color:#3c3c3c;font-weight:normal">10</div>
<div class="hl" style="left:0;top:135.814px;width:25.5px;background:#c9c9c9"></div>
<div class="hd" style="left:0;width:26px;top:125.835px;color:#3c3c3c;font-weight:normal">11</div>
<div class="hl" style="left:0;top:151.371px;width:25.5px;background:#c9c9c9"></div>
<div class="hd" style="left:0;width:26px;top:141.392px;color:#3c3c3c;font-weight:normal">12</div>
<div class="hl" style="left:0;top:166.928px;width:25.5px;background:#c9c9c9"></div>
<div class="hd" style="left:0;width:26px;top:156.95px;color:#3c3c3c;font-weight:normal">13</div>
<div class="hl" style="left:0;top:182.485px;width:25.5px;background:#c9c9c9"></div>
<div class="hd" style="left:0;width:26px;top:172.507px;color:#3c3c3c;font-weight:normal">14</div>
<div class="hl" style="left:0;top:198.042px;width:25.5px;background:#c9c9c9"></div>
<div class="hd" style="left:0;width:26px;top:188.064px;color:#3c3c3c;font-weight:normal">15</div>
<div class="hl" style="left:0;top:213.599px;width:25.5px;background:#c9c9c9"></div>
<div class="hd" style="left:0;width:26px;top:203.62px;color:#3c3c3c;font-weight:normal">16</div>
<div class="hl" style="left:0;top:229.156px;width:25.5px;background:#c9c9c9"></div>
<div class="hd" style="left:0;width:26px;top:219.178px;color:#3c3c3c;font-weight:normal">17</div>
<div class="hl" style="left:0;top:244.713px;width:25.5px;background:#c9c9c9"></div>
<div class="hd" style="left:0;width:26px;top:234.735px;color:#3c3c3c;font-weight:normal">18</div>
<div class="hl" style="left:0;top:260.27px;width:25.5px;background:#c9c9c9"></div>
<div class="hd" style="left:0;width:26px;top:250.291px;color:#3c3c3c;font-weight:normal">19</div>
<div class="hl" style="left:0;top:275.827px;width:25.5px;background:#c9c9c9"></div>
<div class="hd" style="left:0;width:26px;top:265.849px;color:#3c3c3c;font-weight:normal">20</div>
<div class="hl" style="left:0;top:291.384px;width:25.5px;background:#c9c9c9"></div>
<div class="hd" style="left:0;width:26px;top:281.406px;color:#3c3c3c;font-weight:normal">21</div>
<div class="hl" style="left:0;top:306.941px;width:25.5px;background:#c9c9c9"></div>
<div class="hd" style="left:0;width:26px;top:296.963px;color:#3c3c3c;font-weight:normal">22</div>
<div class="a" style="left:0;top:307.441px;width:25.5px;height:15.557px;background:#e95420"></div>
<div class="hl" style="left:0;top:322.498px;width:25.5px;background:#c9c9c9"></div>
<div class="hd" style="left:0;width:26px;top:312.52px;color:#fff;font-weight:bold">23</div>
<div class="hl" style="left:0;top:338.055px;width:25.5px;background:#c9c9c9"></div>
<div class="hd" style="left:0;width:26px;top:328.077px;color:#3c3c3c;font-weight:normal">24</div>
<div class="a" style="left:0;top:0;width:813px;height:13px;background:#f4f4f3;border-top:1px solid #d4d4d4;border-bottom:1px solid #c9c9c9"></div>
<div class="vl" style="left:25px;top:1px;height:12px;background:#c9c9c9"></div>
<div class="a" style="left:192.4px;top:1px;width:48.4px;height:12px;background:#e95420"></div>
<div class="vl" style="left:36px;top:1px;height:12px;background:#c9c9c9"></div>
<div class="hd" style="left:21px;width:20.5px;top:3.400px;color:#3c3c3c;font-weight:normal">A</div>
<div class="vl" style="left:94px;top:1px;height:12px;background:#c9c9c9"></div>
<div class="hd" style="left:31.5px;width:68px;top:3.400px;color:#3c3c3c;font-weight:normal">B</div>
<div class="vl" style="left:146.1px;top:1px;height:12px;background:#c9c9c9"></div>
<div class="hd" style="left:89.5px;width:62.1px;top:3.400px;color:#3c3c3c;font-weight:normal">C</div>
<div class="vl" style="left:191.9px;top:1px;height:12px;background:#c9c9c9"></div>
<div class="hd" style="left:141.6px;width:55.8px;top:3.400px;color:#3c3c3c;font-weight:normal">D</div>
<div class="vl" style="left:240.3px;top:1px;height:12px;background:#c9c9c9"></div>
<div class="hd" style="left:187.4px;width:58.4px;top:3.400px;color:#fff;font-weight:bold">E</div>
<div class="vl" style="left:298.7px;top:1px;height:12px;background:#c9c9c9"></div>
<div class="hd" style="left:235.8px;width:68.4px;top:3.400px;color:#3c3c3c;font-weight:normal">F</div>
<div class="vl" style="left:342.1px;top:1px;height:12px;background:#c9c9c9"></div>
<div class="hd" style="left:294.2px;width:53.4px;top:3.400px;color:#3c3c3c;font-weight:normal">G</div>
<div class="vl" style="left:347.1px;top:1px;height:12px;background:#c9c9c9"></div>
<div class="hd" style="left:337.6px;width:15px;top:3.400px;color:#3c3c3c;font-weight:normal">H</div>
<div class="vl" style="left:425.9px;top:1px;height:12px;background:#c9c9c9"></div>
<div class="hd" style="left:342.6px;width:88.8px;top:3.400px;color:#3c3c3c;font-weight:normal">I</div>
<div class="vl" style="left:468.2px;top:1px;height:12px;background:#c9c9c9"></div>
<div class="hd" style="left:421.4px;width:52.3px;top:3.400px;color:#3c3c3c;font-weight:normal">J</div>
<div class="vl" style="left:513.7px;top:1px;height:12px;background:#c9c9c9"></div>
<div class="hd" style="left:463.7px;width:55.5px;top:3.400px;color:#3c3c3c;font-weight:normal">K</div>
<div class="vl" style="left:558.7px;top:1px;height:12px;background:#c9c9c9"></div>
<div class="hd" style="left:509.2px;width:55px;top:3.400px;color:#3c3c3c;font-weight:normal">L</div>
<div class="vl" style="left:604.1px;top:1px;height:12px;background:#c9c9c9"></div>
<div class="hd" style="left:554.2px;width:55.4px;top:3.400px;color:#3c3c3c;font-weight:normal">M</div>
<div class="vl" style="left:650.4px;top:1px;height:12px;background:#c9c9c9"></div>
<div class="hd" style="left:599.6px;width:56.3px;top:3.400px;color:#3c3c3c;font-weight:normal">N</div>
<div class="vl" style="left:704.5px;top:1px;height:12px;background:#c9c9c9"></div>
<div class="hd" style="left:645.9px;width:64.1px;top:3.400px;color:#3c3c3c;font-weight:normal">O</div>
<div class="vl" style="left:812.5px;top:1px;height:12px;background:#c9c9c9"></div>
<div class="hd" style="left:700px;width:136px;top:3.400px;color:#3c3c3c;font-weight:normal">P</div>
<div class="a" style="left:146.6px;top:47.3px;width:196px;height:16px;background:#c4edcf;"></div>
<div class="a" style="left:347.6px;top:47.3px;width:121.1px;height:16px;background:#c4edcf;"></div>
<div class="a" style="left:146.6px;top:66px;width:196px;height:15.4px;background:#fecb99;"></div>
<div class="a" style="left:347.6px;top:66px;width:121.1px;height:15.4px;background:#fecb99;"></div>
<div class="a" style="left:36.5px;top:90.3px;width:306.1px;height:14.9px;background:#c4edcf;"></div>
<div class="a" style="left:347.6px;top:90.3px;width:121.1px;height:14.9px;background:#c4edcf;"></div>
<div class="a" style="left:36.5px;top:105.2px;width:306.1px;height:230.8px;background:#cfe6f5;"></div>
<div class="a" style="left:347.6px;top:105.2px;width:121.1px;height:230.8px;background:#fecb99;"></div>
<svg class="a" style="left:0;top:0" width="813" height="336"><line x1="146.60" y1="47.30" x2="342.60" y2="47.30" stroke="rgba(0,0,0,0.24)" stroke-width="0.8"/><line x1="146.60" y1="63.30" x2="342.60" y2="63.30" stroke="rgba(0,0,0,0.24)" stroke-width="0.8"/><line x1="146.60" y1="47.30" x2="146.60" y2="63.30" stroke="rgba(0,0,0,0.24)" stroke-width="0.8"/><line x1="342.60" y1="47.30" x2="342.60" y2="63.30" stroke="rgba(0,0,0,0.24)" stroke-width="0.8"/><line x1="192.40" y1="47.30" x2="192.40" y2="63.30" stroke="rgba(0,0,0,0.2)" stroke-width="0.8"/><line x1="240.80" y1="47.30" x2="240.80" y2="63.30" stroke="rgba(0,0,0,0.2)" stroke-width="0.8"/><line x1="299.20" y1="47.30" x2="299.20" y2="63.30" stroke="rgba(0,0,0,0.2)" stroke-width="0.8"/><line x1="146.60" y1="66.00" x2="342.60" y2="66.00" stroke="rgba(0,0,0,0.38)" stroke-width="0.8"/><line x1="146.60" y1="81.40" x2="342.60" y2="81.40" stroke="rgba(0,0,0,0.38)" stroke-width="0.8"/><line x1="146.60" y1="66.00" x2="146.60" y2="81.40" stroke="rgba(0,0,0,0.38)" stroke-width="0.8"/><line x1="342.60" y1="66.00" x2="342.60" y2="81.40" stroke="rgba(0,0,0,0.38)" stroke-width="0.8"/><line x1="192.40" y1="66.00" x2="192.40" y2="81.40" stroke="rgba(0,0,0,0.2)" stroke-width="0.8"/><line x1="240.80" y1="66.00" x2="240.80" y2="81.40" stroke="rgba(0,0,0,0.2)" stroke-width="0.8"/><line x1="299.20" y1="66.00" x2="299.20" y2="81.40" stroke="rgba(0,0,0,0.2)" stroke-width="0.8"/><line x1="347.60" y1="47.30" x2="468.70" y2="47.30" stroke="rgba(0,0,0,0.24)" stroke-width="0.8"/><line x1="347.60" y1="63.30" x2="468.70" y2="63.30" stroke="rgba(0,0,0,0.24)" stroke-width="0.8"/><line x1="347.60" y1="47.30" x2="347.60" y2="63.30" stroke="rgba(0,0,0,0.24)" stroke-width="0.8"/><line x1="468.70" y1="47.30" x2="468.70" y2="63.30" stroke="rgba(0,0,0,0.24)" stroke-width="0.8"/><line x1="426.40" y1="47.30" x2="426.40" y2="63.30" stroke="rgba(0,0,0,0.2)" stroke-width="0.8"/><line x1="347.60" y1="66.00" x2="468.70" y2="66.00" stroke="rgba(0,0,0,0.38)" stroke-width="0.8"/><line x1="347.60" y1="81.40" x2="468.70" y2="81.40" stroke="rgba(0,0,0,0.38)" stroke-width="0.8"/><line x1="347.60" y1="66.00" x2="347.60" y2="81.40" stroke="rgba(0,0,0,0.38)" stroke-width="0.8"/><line x1="468.70" y1="66.00" x2="468.70" y2="81.40" stroke="rgba(0,0,0,0.38)" stroke-width="0.8"/><line x1="426.40" y1="66.00" x2="426.40" y2="81.40" stroke="rgba(0,0,0,0.2)" stroke-width="0.8"/><line x1="36.50" y1="90.30" x2="342.60" y2="90.30" stroke="rgba(10,25,40,0.6)" stroke-width="0.72"/><line x1="36.50" y1="105.20" x2="342.60" y2="105.20" stroke="rgba(10,25,40,0.72)" stroke-width="0.72"/><line x1="36.50" y1="120.76" x2="342.60" y2="120.76" stroke="rgba(10,25,40,0.72)" stroke-width="0.72"/><line x1="36.50" y1="136.31" x2="342.60" y2="136.31" stroke="rgba(10,25,40,0.72)" stroke-width="0.72"/><line x1="36.50" y1="151.87" x2="342.60" y2="151.87" stroke="rgba(10,25,40,0.72)" stroke-width="0.72"/><line x1="36.50" y1="167.43" x2="342.60" y2="167.43" stroke="rgba(10,25,40,0.72)" stroke-width="0.72"/><line x1="36.50" y1="182.99" x2="342.60" y2="182.99" stroke="rgba(10,25,40,0.72)" stroke-width="0.72"/><line x1="36.50" y1="198.54" x2="342.60" y2="198.54" stroke="rgba(10,25,40,0.72)" stroke-width="0.72"/><line x1="36.50" y1="214.10" x2="342.60" y2="214.10" stroke="rgba(10,25,40,0.72)" stroke-width="0.72"/><line x1="36.50" y1="229.66" x2="342.60" y2="229.66" stroke="rgba(10,25,40,0.72)" stroke-width="0.72"/><line x1="36.50" y1="245.21" x2="342.60" y2="245.21" stroke="rgba(10,25,40,0.72)" stroke-width="0.72"/><line x1="36.50" y1="260.77" x2="342.60" y2="260.77" stroke="rgba(10,25,40,0.72)" stroke-width="0.72"/><line x1="36.50" y1="276.33" x2="342.60" y2="276.33" stroke="rgba(10,25,40,0.72)" stroke-width="0.72"/><line x1="36.50" y1="291.88" x2="342.60" y2="291.88" stroke="rgba(10,25,40,0.72)" stroke-width="0.72"/><line x1="36.50" y1="307.44" x2="342.60" y2="307.44" stroke="rgba(10,25,40,0.72)" stroke-width="0.72"/><line x1="36.50" y1="323.00" x2="342.60" y2="323.00" stroke="rgba(10,25,40,0.72)" stroke-width="0.72"/><line x1="36.50" y1="90.30" x2="36.50" y2="336.00" stroke="rgba(10,25,40,0.6)" stroke-width="0.72"/><line x1="94.50" y1="90.30" x2="94.50" y2="336.00" stroke="rgba(10,25,40,0.72)" stroke-width="0.72"/><line x1="146.60" y1="90.30" x2="146.60" y2="336.00" stroke="rgba(10,25,40,0.72)" stroke-width="0.72"/><line x1="192.40" y1="90.30" x2="192.40" y2="336.00" stroke="rgba(10,25,40,0.72)" stroke-width="0.72"/><line x1="240.80" y1="90.30" x2="240.80" y2="336.00" stroke="rgba(10,25,40,0.72)" stroke-width="0.72"/><line x1="299.20" y1="90.30" x2="299.20" y2="336.00" stroke="rgba(10,25,40,0.72)" stroke-width="0.72"/><line x1="342.60" y1="90.30" x2="342.60" y2="336.00" stroke="rgba(10,25,40,0.6)" stroke-width="0.72"/><line x1="347.60" y1="90.30" x2="468.70" y2="90.30" stroke="rgba(80,40,0,0.6)" stroke-width="0.72"/><line x1="347.60" y1="105.20" x2="468.70" y2="105.20" stroke="rgba(95,45,0,0.72)" stroke-width="0.72"/><line x1="347.60" y1="120.76" x2="468.70" y2="120.76" stroke="rgba(95,45,0,0.72)" stroke-width="0.72"/><line x1="347.60" y1="136.31" x2="468.70" y2="136.31" stroke="rgba(95,45,0,0.72)" stroke-width="0.72"/><line x1="347.60" y1="151.87" x2="468.70" y2="151.87" stroke="rgba(95,45,0,0.72)" stroke-width="0.72"/><line x1="347.60" y1="167.43" x2="468.70" y2="167.43" stroke="rgba(95,45,0,0.72)" stroke-width="0.72"/><line x1="347.60" y1="182.99" x2="468.70" y2="182.99" stroke="rgba(95,45,0,0.72)" stroke-width="0.72"/><line x1="347.60" y1="198.54" x2="468.70" y2="198.54" stroke="rgba(95,45,0,0.72)" stroke-width="0.72"/><line x1="347.60" y1="214.10" x2="468.70" y2="214.10" stroke="rgba(95,45,0,0.72)" stroke-width="0.72"/><line x1="347.60" y1="229.66" x2="468.70" y2="229.66" stroke="rgba(95,45,0,0.72)" stroke-width="0.72"/><line x1="347.60" y1="245.21" x2="468.70" y2="245.21" stroke="rgba(95,45,0,0.72)" stroke-width="0.72"/><line x1="347.60" y1="260.77" x2="468.70" y2="260.77" stroke="rgba(95,45,0,0.72)" stroke-width="0.72"/><line x1="347.60" y1="276.33" x2="468.70" y2="276.33" stroke="rgba(95,45,0,0.72)" stroke-width="0.72"/><line x1="347.60" y1="291.88" x2="468.70" y2="291.88" stroke="rgba(95,45,0,0.72)" stroke-width="0.72"/><line x1="347.60" y1="307.44" x2="468.70" y2="307.44" stroke="rgba(95,45,0,0.72)" stroke-width="0.72"/><line x1="347.60" y1="323.00" x2="468.70" y2="323.00" stroke="rgba(95,45,0,0.72)" stroke-width="0.72"/><line x1="347.60" y1="90.30" x2="347.60" y2="336.00" stroke="rgba(80,40,0,0.6)" stroke-width="0.72"/><line x1="426.40" y1="90.30" x2="426.40" y2="336.00" stroke="rgba(95,45,0,0.72)" stroke-width="0.72"/><line x1="468.70" y1="90.30" x2="468.70" y2="336.00" stroke="rgba(80,40,0,0.6)" stroke-width="0.72"/></svg>
<div class="c" style="left:245.3px;width:60px;top:23.4px">Your Name</div>
<div class="c " style="left:136.6px;width:65.8px;top:38.7px;">Systolic</div>
<div class="c " style="left:182.4px;width:68.4px;top:38.7px;">Diastolic</div>
<div class="c " style="left:230.8px;width:78.4px;top:38.7px;">Heart Rate</div>
<div class="c " style="left:289.2px;width:63.4px;top:38.7px;">Weight</div>
<div class="c " style="left:337.6px;width:98.8px;top:38.7px;">PP</div>
<div class="c " style="left:416.4px;width:62.3px;top:38.7px;">MAP</div>
<div class="c" style="left:60px;width:82px;text-align:right;top:51.2px">Targets &gt;</div>
<div class="c" style="left:61.6px;width:82px;text-align:right;top:69.6px">Average &gt;</div>
<div class="c " style="left:136.6px;width:65.8px;top:51.4px;">120</div>
<div class="c " style="left:182.4px;width:68.4px;top:51.4px;">80</div>
<div class="c " style="left:230.8px;width:78.4px;top:51.4px;">81</div>
<div class="c " style="left:289.2px;width:63.4px;top:51.4px;">151-163</div>
<div class="c " style="left:337.6px;width:98.8px;top:51.4px;">30 - 40</div>
<div class="c " style="left:416.4px;width:62.3px;top:51.4px;">70 - 110</div>
<div class="c b" style="left:136.6px;width:65.8px;top:69.8px;">122</div>
<div class="c b" style="left:182.4px;width:68.4px;top:69.8px;">84</div>
<div class="c b" style="left:230.8px;width:78.4px;top:69.8px;">86</div>
<div class="c b" style="left:289.2px;width:63.4px;top:69.8px;">198</div>
<div class="c b" style="left:337.6px;width:98.8px;top:69.8px;">38</div>
<div class="c b" style="left:416.4px;width:62.3px;top:69.8px;">96</div>
<div class="c b" style="left:26.5px;width:78px;top:93.65px;">Date</div>
<div class="c b" style="left:84.5px;width:72.1px;top:93.65px;">Time</div>
<div class="c b" style="left:136.6px;width:65.8px;top:93.65px;">Systolic</div>
<div class="c b" style="left:182.4px;width:68.4px;top:93.65px;">Diastolic</div>
<div class="c b" style="left:230.8px;width:78.4px;top:93.65px;">Heart Rate</div>
<div class="c b" style="left:289.2px;width:63.4px;top:93.65px;">Weight</div>
<div class="c b" style="left:337.6px;width:98.8px;top:93.65px;">Pulse Pressure</div>
<div class="c b" style="left:416.4px;width:62.3px;top:93.65px;">MAP</div>
<div class="c " style="left:26.5px;width:78px;top:109.078px;">10/14/2018</div>
<div class="c " style="left:84.5px;width:72.1px;top:109.078px;">10:25</div>
<div class="c " style="left:136.6px;width:65.8px;top:109.078px;">120</div>
<div class="c " style="left:182.4px;width:68.4px;top:109.078px;">85</div>
<div class="c " style="left:230.8px;width:78.4px;top:109.078px;">85</div>
<div class="c " style="left:289.2px;width:63.4px;top:109.078px;">200.0</div>
<div class="c b" style="left:337.6px;width:98.8px;top:109.078px;">35</div>
<div class="c b" style="left:416.4px;width:62.3px;top:109.078px;">96.7</div>
<div class="c " style="left:26.5px;width:78px;top:124.635px;">10/15/2018</div>
<div class="c " style="left:84.5px;width:72.1px;top:124.635px;">10:25</div>
<div class="c " style="left:136.6px;width:65.8px;top:124.635px;">121</div>
<div class="c " style="left:182.4px;width:68.4px;top:124.635px;">82</div>
<div class="c " style="left:230.8px;width:78.4px;top:124.635px;">88</div>
<div class="c " style="left:289.2px;width:63.4px;top:124.635px;">198.0</div>
<div class="c b" style="left:337.6px;width:98.8px;top:124.635px;">39</div>
<div class="c b" style="left:416.4px;width:62.3px;top:124.635px;">95.0</div>
<div class="c " style="left:26.5px;width:78px;top:140.192px;">10/16/2018</div>
<div class="c " style="left:84.5px;width:72.1px;top:140.192px;">10:25</div>
<div class="c " style="left:136.6px;width:65.8px;top:140.192px;">124</div>
<div class="c " style="left:182.4px;width:68.4px;top:140.192px;">84</div>
<div class="c " style="left:230.8px;width:78.4px;top:140.192px;">86</div>
<div class="c " style="left:289.2px;width:63.4px;top:140.192px;">196.0</div>
<div class="c b" style="left:337.6px;width:98.8px;top:140.192px;">40</div>
<div class="c b" style="left:416.4px;width:62.3px;top:140.192px;">97.3</div>
<div class="a" style="left:422.2px;top:91.2px;width:3px;height:2.8px;background:#e8102a"></div>
<div class="a" style="left:464.5px;top:91.2px;width:3px;height:2.8px;background:#e8102a"></div>
<div class="a" style="left:192px;top:306.841px;width:49.2px;height:16.757px;border:1.3px solid #111"></div>
<div class="a" style="left:239.5px;top:321.898px;width:3px;height:3px;background:#111;border-radius:1px"></div>
<div class="a" style="left:514px;top:17px;width:191px;height:46px;border:1px solid #f3a3a0;background:#fff"></div>
<div class="c b caut" style="left:514px;width:191px;top:18.1px;font-size:7.52px;color:#e01c1c">!Caution!</div>
<div class="c b caut" style="left:514px;width:191px;top:28.1px;font-size:7.52px;">Discuss the Targets with your Doctor.</div>
<div class="c b caut" style="left:514px;width:191px;top:38.5px;font-size:7.52px;">Pulse Pressure &amp; Mean Arterial Pressure</div>
<div class="c b caut" style="left:514px;width:191px;top:49.3px;font-size:7.52px;">ranges are <span style="text-decoration:underline;font-weight:normal">NOT</span> the same for everyone.</div>
<svg class="a" style="left:0;top:0" width="813" height="336" viewBox="0 106 813 336" font-family="DejaVu Sans, Liberation Sans, sans-serif">
<rect x="474.6" y="187.2" width="311.6" height="89.6" fill="#fff" stroke="#4b9aa8" stroke-width="1.5"/>
<rect x="473.8" y="282" width="312.4" height="113.6" fill="#fff" stroke="#4b9aa8" stroke-width="1.5"/>
<rect x="473.8" y="400.6" width="312.4" height="60" fill="#fff" stroke="#4b9aa8" stroke-width="1.5"/>
<line x1="491.5" y1="262.4" x2="707.2" y2="262.4" stroke="#b8b8b8" stroke-width="0.8"/>
<text x="490" y="264.8" font-size="7.1" text-anchor="end" fill="#333">40</text>
<line x1="491.5" y1="248.35" x2="707.2" y2="248.35" stroke="#b8b8b8" stroke-width="0.8"/>
<text x="490" y="250.75" font-size="7.1" text-anchor="end" fill="#333">60</text>
<line x1="491.5" y1="234.3" x2="707.2" y2="234.3" stroke="#b8b8b8" stroke-width="0.8"/>
<text x="490" y="236.7" font-size="7.1" text-anchor="end" fill="#333">80</text>
<line x1="491.5" y1="220.25" x2="707.2" y2="220.25" stroke="#b8b8b8" stroke-width="0.8"/>
<text x="490" y="222.65" font-size="7.1" text-anchor="end" fill="#333">100</text>
<line x1="491.5" y1="206.2" x2="707.2" y2="206.2" stroke="#b8b8b8" stroke-width="0.8"/>
<text x="490" y="208.6" font-size="7.1" text-anchor="end" fill="#333">120</text>
<line x1="491.5" y1="192.15" x2="707.2" y2="192.15" stroke="#b8b8b8" stroke-width="0.8"/>
<text x="490" y="194.55" font-size="7.1" text-anchor="end" fill="#333">140</text>
<line x1="494.4" y1="192" x2="494.4" y2="264.4" stroke="#b0b0b0" stroke-width="0.8"/>
<line x1="494.4" y1="262.4" x2="494.4" y2="264.6" stroke="#b0b0b0" stroke-width="0.8"/>
<text x="494.4" y="273.7" font-size="7.1" text-anchor="middle" fill="#333">1</text>
<line x1="510.7" y1="262.4" x2="510.7" y2="264.6" stroke="#b0b0b0" stroke-width="0.8"/>
<text x="510.7" y="273.7" font-size="7.1" text-anchor="middle" fill="#333">3</text>
<line x1="527" y1="262.4" x2="527" y2="264.6" stroke="#b0b0b0" stroke-width="0.8"/>
<text x="527" y="273.7" font-size="7.1" text-anchor="middle" fill="#333">5</text>
<line x1="543.3" y1="262.4" x2="543.3" y2="264.6" stroke="#b0b0b0" stroke-width="0.8"/>
<text x="543.3" y="273.7" font-size="7.1" text-anchor="middle" fill="#333">7</text>
<line x1="559.6" y1="262.4" x2="559.6" y2="264.6" stroke="#b0b0b0" stroke-width="0.8"/>
<text x="559.6" y="273.7" font-size="7.1" text-anchor="middle" fill="#333">9</text>
<line x1="575.9" y1="262.4" x2="575.9" y2="264.6" stroke="#b0b0b0" stroke-width="0.8"/>
<text x="575.9" y="273.7" font-size="7.1" text-anchor="middle" fill="#333">11</text>
<line x1="592.2" y1="262.4" x2="592.2" y2="264.6" stroke="#b0b0b0" stroke-width="0.8"/>
<text x="592.2" y="273.7" font-size="7.1" text-anchor="middle" fill="#333">13</text>
<line x1="608.5" y1="262.4" x2="608.5" y2="264.6" stroke="#b0b0b0" stroke-width="0.8"/>
<text x="608.5" y="273.7" font-size="7.1" text-anchor="middle" fill="#333">15</text>
<line x1="624.8" y1="262.4" x2="624.8" y2="264.6" stroke="#b0b0b0" stroke-width="0.8"/>
<text x="624.8" y="273.7" font-size="7.1" text-anchor="middle" fill="#333">17</text>
<line x1="641.1" y1="262.4" x2="641.1" y2="264.6" stroke="#b0b0b0" stroke-width="0.8"/>
<text x="641.1" y="273.7" font-size="7.1" text-anchor="middle" fill="#333">19</text>
<line x1="657.4" y1="262.4" x2="657.4" y2="264.6" stroke="#b0b0b0" stroke-width="0.8"/>
<text x="657.4" y="273.7" font-size="7.1" text-anchor="middle" fill="#333">21</text>
<line x1="673.7" y1="262.4" x2="673.7" y2="264.6" stroke="#b0b0b0" stroke-width="0.8"/>
<text x="673.7" y="273.7" font-size="7.1" text-anchor="middle" fill="#333">23</text>
<line x1="690" y1="262.4" x2="690" y2="264.6" stroke="#b0b0b0" stroke-width="0.8"/>
<text x="690" y="273.7" font-size="7.1" text-anchor="middle" fill="#333">25</text>
<line x1="706.3" y1="262.4" x2="706.3" y2="264.6" stroke="#b0b0b0" stroke-width="0.8"/>
<text x="706.3" y="273.7" font-size="7.1" text-anchor="middle" fill="#333">27</text>
<polyline points="494.4,230.8 502.5,228.7 510.7,230.1 515.1,263.4" fill="none" stroke="#ffd320" stroke-width="1.9" stroke-linejoin="round"/>
<path d="M491.8 228.2h5.2l-2.6 4.6z" fill="#ffd320"/>
<path d="M499.9 226.1h5.2l-2.6 4.6z" fill="#ffd320"/>
<path d="M508.1 227.5h5.2l-2.6 4.6z" fill="#ffd320"/>
<polyline points="494.4,230.8 502.5,232.9 510.7,231.5 515.0,263.4" fill="none" stroke="#ff4a12" stroke-width="1.9" stroke-linejoin="round"/>
<path d="M494.4 228.2l2.6 2.6l-2.6 2.6l-2.6 -2.6z" fill="#ff4a12"/>
<path d="M502.5 230.3l2.6 2.6l-2.6 2.6l-2.6 -2.6z" fill="#ff4a12"/>
<path d="M510.7 228.9l2.6 2.6l-2.6 2.6l-2.6 -2.6z" fill="#ff4a12"/>
<polyline points="494.4,206.2 502.5,205.5 510.7,203.4 516.2,263.4" fill="none" stroke="#0f4780" stroke-width="1.9" stroke-linejoin="round"/>
<rect x="491.6" y="203.4" width="5.6" height="5.6" fill="#0f4780"/>
<rect x="499.7" y="202.7" width="5.6" height="5.6" fill="#0f4780"/>
<rect x="507.9" y="200.6" width="5.6" height="5.6" fill="#0f4780"/>
<line x1="724.6" y1="221.6" x2="740" y2="221.6" stroke="#0f4780" stroke-width="1.5"/>
<rect x="730.3" y="219.6" width="4" height="4" fill="#0f4780"/>
<text x="742.2" y="224" font-size="6.85" fill="#333">Systolic</text>
<line x1="724.6" y1="231.9" x2="740" y2="231.9" stroke="#ff4a12" stroke-width="1.5"/>
<path d="M732.3 229.6l2.3 2.3l-2.3 2.3l-2.3 -2.3z" fill="#ff4a12"/>
<text x="742.2" y="234.3" font-size="6.85" fill="#333">Diastolic</text>
<line x1="724.6" y1="242.1" x2="740" y2="242.1" stroke="#ffd320" stroke-width="1.5"/>
<path d="M730.0 240.1h4.6l-2.3 4z" fill="#ffd320"/>
<text x="742.2" y="244.5" font-size="6.85" fill="#333">Heart Rate</text>
<text x="629.8" y="301.4" font-size="12.5" font-weight="bold" text-anchor="middle" fill="#111">Pulse Pressure</text>
<line x1="489.1" y1="359.63" x2="776.1" y2="359.63" stroke="#c4c4c4" stroke-width="0.8"/>
<line x1="489.1" y1="350.56" x2="776.1" y2="350.56" stroke="#c4c4c4" stroke-width="0.8"/>
<line x1="489.1" y1="341.49" x2="776.1" y2="341.49" stroke="#c4c4c4" stroke-width="0.8"/>
<line x1="489.1" y1="332.42" x2="776.1" y2="332.42" stroke="#c4c4c4" stroke-width="0.8"/>
<line x1="489.1" y1="323.35" x2="776.1" y2="323.35" stroke="#c4c4c4" stroke-width="0.8"/>
<rect x="489.1" y="314.3" width="287" height="54.4" fill="none" stroke="#63639a" stroke-width="1.3"/>
<text x="487.3" y="370.8" font-size="6" text-anchor="end" fill="#333">15</text>
<text x="487.3" y="361.73" font-size="6" text-anchor="end" fill="#333">20</text>
<text x="487.3" y="352.66" font-size="6" text-anchor="end" fill="#333">25</text>
<text x="487.3" y="343.59" font-size="6" text-anchor="end" fill="#333">30</text>
<text x="487.3" y="334.52" font-size="6" text-anchor="end" fill="#333">35</text>
<text x="487.3" y="325.45" font-size="6" text-anchor="end" fill="#333">40</text>
<text x="487.3" y="316.38" font-size="6" text-anchor="end" fill="#333">45</text>
<text x="489.1" y="377" font-size="6" text-anchor="middle" fill="#333">1</text>
<text x="500.55" y="377" font-size="6" text-anchor="middle" fill="#333">2</text>
<text x="512" y="377" font-size="6" text-anchor="middle" fill="#333">3</text>
<text x="523.45" y="377" font-size="6" text-anchor="middle" fill="#333">4</text>
<text x="534.9" y="377" font-size="6" text-anchor="middle" fill="#333">5</text>
<text x="546.35" y="377" font-size="6" text-anchor="middle" fill="#333">6</text>
<text x="557.8" y="377" font-size="6" text-anchor="middle" fill="#333">7</text>
<text x="569.25" y="377" font-size="6" text-anchor="middle" fill="#333">8</text>
<text x="580.7" y="377" font-size="6" text-anchor="middle" fill="#333">9</text>
<text x="592.15" y="377" font-size="6" text-anchor="middle" fill="#333">10</text>
<text x="603.6" y="377" font-size="6" text-anchor="middle" fill="#333">11</text>
<text x="615.05" y="377" font-size="6" text-anchor="middle" fill="#333">12</text>
<text x="626.5" y="377" font-size="6" text-anchor="middle" fill="#333">13</text>
<text x="637.95" y="377" font-size="6" text-anchor="middle" fill="#333">14</text>
<text x="649.4" y="377" font-size="6" text-anchor="middle" fill="#333">15</text>
<text x="660.85" y="377" font-size="6" text-anchor="middle" fill="#333">16</text>
<text x="672.3" y="377" font-size="6" text-anchor="middle" fill="#333">17</text>
<text x="683.75" y="377" font-size="6" text-anchor="middle" fill="#333">18</text>
<text x="695.2" y="377" font-size="6" text-anchor="middle" fill="#333">19</text>
<text x="706.65" y="377" font-size="6" text-anchor="middle" fill="#333">20</text>
<text x="718.1" y="377" font-size="6" text-anchor="middle" fill="#333">21</text>
<text x="729.55" y="377" font-size="6" text-anchor="middle" fill="#333">22</text>
<text x="741" y="377" font-size="6" text-anchor="middle" fill="#333">23</text>
<text x="752.45" y="377" font-size="6" text-anchor="middle" fill="#333">24</text>
<text x="763.9" y="377" font-size="6" text-anchor="middle" fill="#333">25</text>
<text x="775.35" y="377" font-size="6" text-anchor="middle" fill="#333">26</text>
<polyline points="489.1,332.4 500.6,325.2 512.0,323.3 519.5,368.7" fill="none" stroke="#3f8fa2" stroke-width="1.3" stroke-linejoin="round"/>
<rect x="487.0" y="330.3" width="4.2" height="4.2" fill="#3f8fa2"/>
<rect x="498.4" y="323.1" width="4.2" height="4.2" fill="#3f8fa2"/>
<rect x="509.9" y="321.2" width="4.2" height="4.2" fill="#3f8fa2"/>
<line x1="598.7" y1="389.3" x2="614.5" y2="389.3" stroke="#3f8fa2" stroke-width="1.1"/>
<rect x="604.6" y="387.5" width="3.6" height="3.6" fill="#3f8fa2"/>
<text x="616.5" y="391.4" font-size="6" fill="#333">Pulse Pressure</text>
<text x="629.6" y="420" font-size="12.5" font-weight="bold" text-anchor="middle" fill="#111">Mean Arterial Pressure</text>
<rect x="489.2" y="432.6" width="283.3" height="40" fill="none" stroke="#63639a" stroke-width="1.3"/>
<text x="487.3" y="434.3" font-size="6" text-anchor="end" fill="#333">100</text>
<text x="487.3" y="442.3" font-size="6" text-anchor="end" fill="#333">95</text>
<polyline points="489.2,437.9 500.6,440.6 512.1,436.9" fill="none" stroke="#3f8fa2" stroke-width="1.3" stroke-linejoin="round"/>
<rect x="487.1" y="435.8" width="4.2" height="4.2" fill="#3f8fa2"/>
<rect x="498.5" y="438.5" width="4.2" height="4.2" fill="#3f8fa2"/>
<rect x="510.0" y="434.8" width="4.2" height="4.2" fill="#3f8fa2"/>
</svg>
</div>
<div class="a" style="left:0;top:442px;width:813px;height:7.5px;background:#d2d2d2"></div>
<div class="a" style="left:2.800px;top:444.100px;width:374.700px;height:3.700px;background:#7e7e7e;border-radius:1.850px"></div>
<div class="a" style="left:810.5px;top:443.6px;width:1px;height:4.6px;background:repeating-linear-gradient(#777 0 1px,transparent 1px 1.8px)"></div>
<div class="a" style="left:813px;top:106px;width:7.400px;height:336px;background:#d2d2d2"></div>
<div class="a" style="left:814.600px;top:112.200px;width:3.300px;height:127.400px;background:#8a8a8a;border-radius:1.600px"></div>
<div class="a" style="left:820.400px;top:88px;width:4px;height:377px;background:#fbfbfb;border-left:1px solid #e2e2e2"></div>
<div class="a" style="left:820.400px;top:253.200px;width:4px;height:45px;background:#a6a6a6"></div>
<svg class="a" style="left:820.6px;top:271px" width="3" height="5"><path d="M0 0L3 2.5L0 5z" fill="#fff"/></svg>
<div class="a" style="left:824px;top:88px;width:26px;height:391px;background:#f7f7f6;border-left:1px solid #d6d6d6"></div>
<svg class="a" style="left:829.5px;top:93px" width="13.6" height="13.6" viewBox="0 0 13.6 13.6"><circle cx="11.50" cy="6.80" r="1.75" fill="#e2e2e2" stroke="#b2b2b2" stroke-width="0.7"/><circle cx="10.12" cy="10.12" r="1.75" fill="#e2e2e2" stroke="#b2b2b2" stroke-width="0.7"/><circle cx="6.80" cy="11.50" r="1.75" fill="#e2e2e2" stroke="#b2b2b2" stroke-width="0.7"/><circle cx="3.48" cy="10.12" r="1.75" fill="#e2e2e2" stroke="#b2b2b2" stroke-width="0.7"/><circle cx="2.10" cy="6.80" r="1.75" fill="#e2e2e2" stroke="#b2b2b2" stroke-width="0.7"/><circle cx="3.48" cy="3.48" r="1.75" fill="#e2e2e2" stroke="#b2b2b2" stroke-width="0.7"/><circle cx="6.80" cy="2.10" r="1.75" fill="#e2e2e2" stroke="#b2b2b2" stroke-width="0.7"/><circle cx="10.12" cy="3.48" r="1.75" fill="#e2e2e2" stroke="#b2b2b2" stroke-width="0.7"/><circle cx="6.8" cy="6.8" r="4.5" fill="#e2e2e2"/><circle cx="6.8" cy="6.8" r="3.1" fill="#f4f4f4" stroke="#b4b4b4" stroke-width="0.8"/><circle cx="6.8" cy="6.8" r="1.3" fill="#e0e0e0" stroke="#b4b4b4" stroke-width="0.6"/></svg>
<div class="a" style="left:829px;top:116.500px;width:17.400px;height:16.800px;background:#fff;border:1px solid #cfcfcf"></div>
<svg class="a" style="left:832px;top:120.6px" width="11.6" height="8.6" viewBox="0 0 11.6 8.6"><rect x="0.300" y="0.300" width="11" height="8" rx="1.200" fill="#5b9bdc" stroke="#8fb4dc" stroke-width="0.600"/><rect x="5.600" y="2.200" width="4.400" height="4.200" rx="1.600" fill="#fff"/></svg>
<div class="t ui" style="left:829.200px;top:139px;font-size:13.400px;font-weight:bold;color:#333;-webkit-text-stroke-width:0.300px">A</div>
<svg class="a" style="left:836.6px;top:140.6px" width="7.6" height="10" viewBox="0 0 7.6 10"><path d="M6.800 0.400l-4.400 6l-1.600 2.800l2.600-1.800l4.200-6z" fill="#e0574d" stroke="#8d6a3a" stroke-width="0.400"/><path d="M0.600 9.400l1-2l1 0.800z" fill="#e9b93c"/></svg>
<svg class="a" style="left:829.6px;top:161.4px" width="13.8" height="12.6" viewBox="0 0 13.8 12.6"><rect x="0.400" y="0.400" width="13" height="2.600" fill="#7d7d7d"/><rect x="0.400" y="3" width="13" height="9" fill="#5ba3e4" stroke="#8696a8" stroke-width="0.700"/><rect x="1" y="7.600" width="11.800" height="3.800" fill="#eea54a"/><circle cx="4.600" cy="8" r="1.300" fill="#f5e27a"/></svg>
<svg class="a" style="left:829.8px;top:183px" width="13.4" height="13.4" viewBox="0 0 13.4 13.4"><circle cx="6.700" cy="6.700" r="5.700" fill="#a9adb8" stroke="#4d5162" stroke-width="2"/><path d="M9.800 3.600l-2 4.200l-4.200 2l2-4.200z" fill="#d8413a"/><path d="M3.600 9.800l2-4.200l2.200 2.200z" fill="#f4f4f4"/></svg>
<div class="t ui" style="left:829.6px;top:206px;font-size:12.4px;font-weight:bold;color:#3a3a3a">f</div>
<div class="t ui" style="left:834.4px;top:211.200px;font-size:6.400px;font-weight:bold;color:#3a3a3a;letter-spacing:-0.300px">(x)</div>
<div class="a" style="left:0;top:449.5px;width:820px;height:17px;background:#f5f5f4"></div>
<svg class="a" style="left:7.5px;top:452.5px" width="10" height="10" viewBox="0 0 10 10"><path d="M7.5 1L2.5 5L7.5 9z" fill="#b9b9b9"/><rect x="1.2" y="1" width="1" height="8" fill="#b9b9b9"/></svg>
<svg class="a" style="left:22.5px;top:452.5px" width="10" height="10" viewBox="0 0 10 10"><path d="M7.5 1L2.5 5L7.5 9z" fill="#b9b9b9"/></svg>
<svg class="a" style="left:37.5px;top:452.5px" width="10" height="10" viewBox="0 0 10 10"><path d="M2.5 1L7.5 5L2.5 9z" fill="#b9b9b9"/></svg>
<svg class="a" style="left:52px;top:452.5px" width="10" height="10" viewBox="0 0 10 10"><path d="M2.5 1L7.5 5L2.5 9z" fill="#b9b9b9"/><rect x="7.8" y="1" width="1" height="8" fill="#b9b9b9"/></svg>
<svg class="a" style="left:72.800px;top:452.200px" width="10.400" height="10.400"><path d="M5.200 0.200v10M0.200 5.200h10" stroke="#2b2b2b" stroke-width="1.500" fill="none"/></svg>
<div class="a" style="left:89.5px;top:450px;width:89px;height:14.8px;background:#fff;border-bottom:2px solid #ec5d62"></div>
<div class="t ui" style="left:99px;top:453.200px;font-size:7.600px;color:#3d3d3dletter-spacing:-0.057px;">Blood Pressure Data</div>
<div class="a" style="left:178.3px;top:450px;width:29.2px;height:15px;background:#9a99fb"></div>
<div class="t ui" style="left:185.8px;top:453.200px;font-size:7.600px;color:#3d3d3dletter-spacing:-0.039px;">BMI</div>
<div class="a" style="left:0;top:465px;width:850px;height:14px;background:#f5f5f4;border-top:1px solid #dcdcdc"></div>
<div class="a" style="left:106px;top:467.500px;width:1px;height:10px;background:#e0e0e0"></div>
<div class="a" style="left:207.5px;top:467.500px;width:1px;height:10px;background:#e0e0e0"></div>
<div class="a" style="left:355px;top:467.500px;width:1px;height:10px;background:#e0e0e0"></div>
<div class="a" style="left:497px;top:467.500px;width:1px;height:10px;background:#e0e0e0"></div>
<div class="a" style="left:550px;top:467.500px;width:1px;height:10px;background:#e0e0e0"></div>
<div class="a" style="left:571px;top:467.500px;width:1px;height:10px;background:#e0e0e0"></div>
<div class="a" style="left:592px;top:467.500px;width:1px;height:10px;background:#e0e0e0"></div>
<div class="a" style="left:730px;top:467.500px;width:1px;height:10px;background:#e0e0e0"></div>
<div class="a" style="left:819.5px;top:467.500px;width:1px;height:10px;background:#e0e0e0"></div>
<div class="t ui" style="left:6.8px;top:468.6px;font-size:7.6px;color:#4a4a4aletter-spacing:0.019px;">Sheet 1 of 2</div>
<div class="t ui" style="left:214px;top:468.6px;font-size:7.6px;color:#4a4a4aletter-spacing:-0.073px;">PageStyle_MtL Blood Pressure Data</div>
<div class="t ui" style="left:431px;top:468.6px;font-size:7.6px;color:#4a4a4aletter-spacing:-0.207px;">English (USA)</div>
<div class="t ui" style="left:640px;top:468.6px;font-size:7.6px;color:#4a4a4aletter-spacing:-0.215px;">Average: ; Sum: 0</div>
<div class="t ui" style="left:827.3px;top:468.6px;font-size:7.6px;color:#4a4a4aletter-spacing:-0.334px;">89%</div>
<div class="a" style="left:746px;top:472.2px;width:59.5px;height:1px;background:#8a8a8a"></div>
<div class="a" style="left:735.5px;top:472.2px;width:5.5px;height:1px;background:#b5b5b5"></div>
<div class="a" style="left:808.8px;top:472.2px;width:5.4px;height:1px;background:#b5b5b5"></div>
<div class="a" style="left:811px;top:470px;width:1px;height:5.4px;background:#b5b5b5"></div>
<div class="a" style="left:768px;top:469.9px;width:5.6px;height:5.6px;border-radius:3px;border:1px solid #777;background:#f8f8f8"></div>
<div class="a" style="left:775px;top:470.6px;width:1px;height:4px;background:#999"></div>
<div class="a" style="left:556px;top:469.5px;width:1px;height:6px;background:#888"></div>
<div class="a" style="left:558px;top:475px;width:5px;height:1px;border-bottom:1px dotted #777"></div>
<div class="a" style="left:574px;top:469.3px;width:8px;height:6.6px;border:1px solid #8a8a8a;background:#e4e4e4"></div>
<div class="a" style="left:576.5px;top:471.3px;width:3px;height:2.6px;background:#777"></div>
<div class="a" style="left:849px;top:23px;width:1px;height:456px;background:rgba(140,140,140,0.45)"></div>
<div class="a" style="left:0;top:478px;width:850px;height:1px;background:rgba(60,65,65,0.55)"></div>
<div class="a" style="left:0;top:1px;width:1px;height:478px;background:rgba(90,100,100,0.600)"></div>
</div></body></html>
